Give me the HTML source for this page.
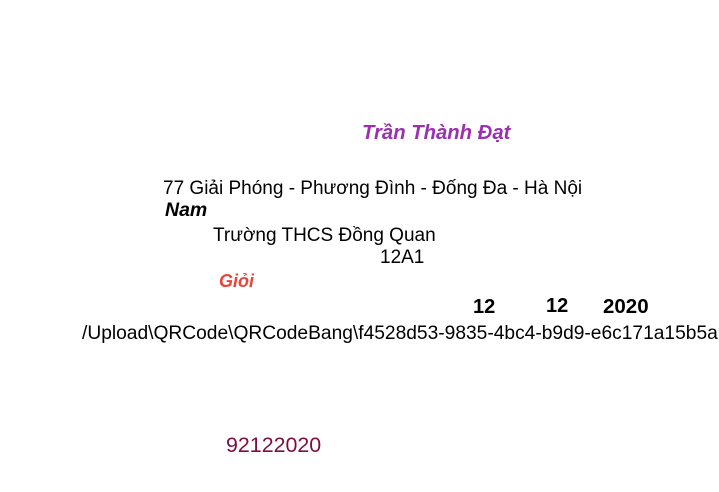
<!DOCTYPE html>
<html><head><meta charset="utf-8"><style>
html,body{margin:0;padding:0;width:719px;height:492px;overflow:hidden;background:#fff;font-family:"Liberation Sans",Arial,sans-serif;}
div{position:absolute;white-space:nowrap;line-height:1;}
</style></head><body>
<div style="left:362px;top:123px;font-size:20.3px;font-weight:bold;font-style:italic;color:#9b30b0;">Trần Thành Đạt</div>
<div style="left:163px;top:179px;font-size:19px;color:#000;">77 Giải Phóng - Phương Đình - Đống Đa - Hà Nội</div>
<div style="left:165px;top:201px;font-size:19.5px;font-weight:bold;font-style:italic;color:#000;">Nam</div>
<div style="left:213px;top:226px;font-size:19px;color:#000;">Trường THCS Đồng Quan</div>
<div style="left:380px;top:248px;font-size:19px;color:#000;">12A1</div>
<div style="left:219px;top:272px;font-size:18px;font-weight:bold;font-style:italic;color:#e8443a;">Giỏi</div>
<div style="left:473px;top:297px;font-size:20px;font-weight:bold;color:#000;">12</div>
<div style="left:546px;top:296px;font-size:20px;font-weight:bold;color:#000;">12</div>
<div style="left:603px;top:297px;font-size:20.5px;font-weight:bold;color:#000;">2020</div>
<div style="left:82px;top:324px;font-size:19.2px;color:#000;">/Upload\QRCode\QRCodeBang\f4528d53-9835-4bc4-b9d9-e6c171a15b5a</div>
<div style="left:226px;top:435px;font-size:21.4px;color:#7a1040;">92122020</div>
</body></html>
